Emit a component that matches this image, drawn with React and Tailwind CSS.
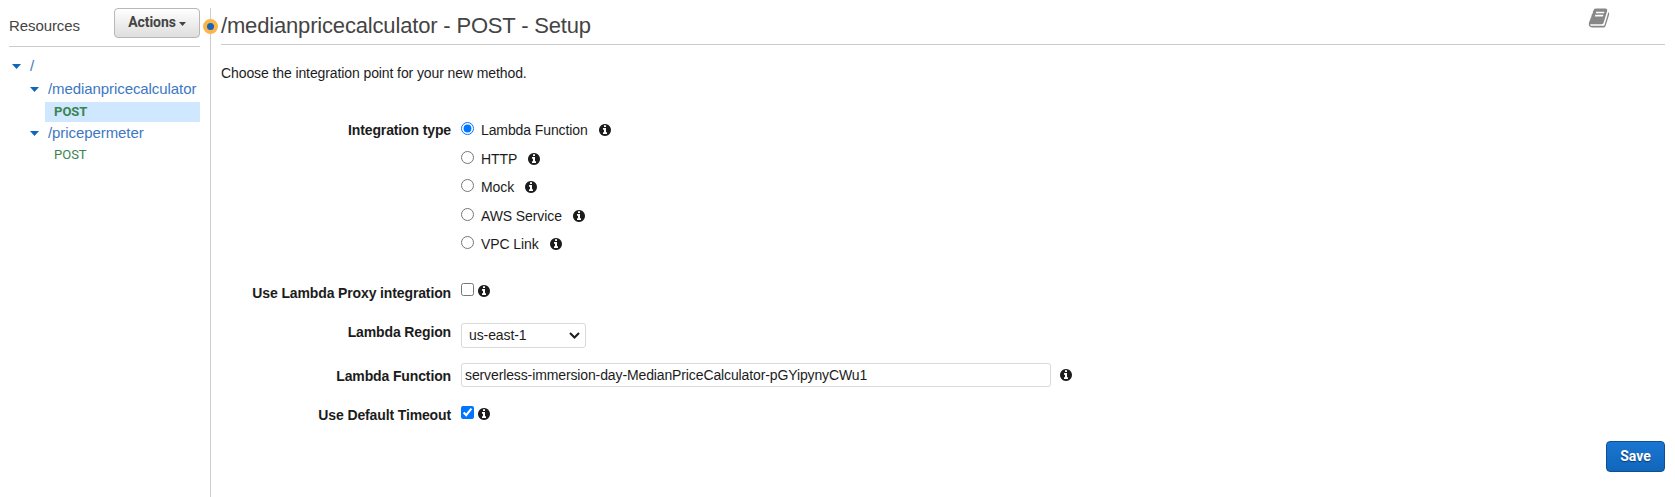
import React from 'react';

function InfoIcon({ className = '' }) {
  return (
    <svg viewBox="128 128 1536 1536" className={`h-3 w-3 shrink-0 fill-[#1c1c1c] ${className}`}>
      <path d="M1152 1376v-160q0-14-9-23t-23-9h-96v-512q0-14-9-23t-23-9h-320q-14 0-23 9t-9 23v160q0 14 9 23t23 9h96v320h-96q-14 0-23 9t-9 23v160q0 14 9 23t23 9h448q14 0 23-9t9-23zm-128-896v-160q0-14-9-23t-23-9h-192q-14 0-23 9t-9 23v160q0 14 9 23t23 9h192q14 0 23-9t9-23zm640 416q0 209-103 385.500t-279.500 279.500-385.500 103-385.500-103-279.500-279.500-103-385.500 103-385.500 279.500-279.500 385.500-103 385.500 103 279.500 279.500 103 385.500z" />
    </svg>
  );
}

function BookIcon() {
  return (
    <svg viewBox="0 0 1792 1792" className="mr-[55px] h-[22px] w-[22px] fill-[#888]">
      <path d="M1703 478q40 57 18 129l-275 906q-19 64-76.500 107.500t-122.500 43.500h-923q-77 0-148.500-53.500t-99.500-131.500q-24-67-2-127 0-4 3-27t4-37q1-8-3-21.500t-3-19.500q2-11 8-21t16.500-23.500 16.500-23.500q23-38 45-91.500t30-91.500q3-10 .5-30t-.5-28q3-11 17-28t17-23q21-36 42-92t25-90q1-9-2.500-32t.5-28q4-13 22-30.500t22-22.500q19-26 42.500-84.500t27.500-96.500q1-8-3-25.500t-2-26.500q2-8 9-18t18-23 17-21q8-12 16.500-30.500t15-35 16-36 19.500-32 26.500-23.500 36-11.500 47.500 5.500l-1 3q38-9 51-9h761q74 0 114 56t18 130l-274 906q-36 119-71.500 153.500t-128.500 34.500h-869q-27 0-38 15-11 16-1 43 24 70 144 70h923q29 0 56-15.500t35-41.500l300-987q7-22 5-57 38 15 59 43zm-1064 2q-4 13 2 22.500t20 9.500h608q13 0 25.500-9.500t16.500-22.500l21-64q4-13-2-22.500t-20-9.500h-608q-13 0-25.500 9.500t-16.500 22.500zm-83 256q-4 13 2 22.500t20 9.500h608q13 0 25.500-9.500t16.500-22.500l21-64q4-13-2-22.500t-20-9.500h-608q-13 0-25.500 9.500t-16.500 22.500z" />
    </svg>
  );
}

function Caret() {
  return (
    <svg viewBox="0 0 9 5" className="h-[5px] w-[9px] shrink-0 fill-[#1166bb]">
      <path d="M0 0h9L4.500 5z" />
    </svg>
  );
}

const types = ['Lambda Function', 'HTTP', 'Mock', 'AWS Service', 'VPC Link'];

function Label({ children, className = '' }) {
  return (
    <div className={`w-[230px] shrink-0 text-right font-bold leading-5 tracking-[-0.13px] ${className}`}>{children}</div>
  );
}

function Sidebar() {
  return (
    <aside className="ml-[9px] mt-2 w-[191px] shrink-0 text-[15px] tracking-[-0.08px]">
      <div className="flex h-[39px] items-start justify-between border-b border-[#ccc] text-[#444]">
        <span className="pt-2 leading-5">Resources</span>
        <button className="flex h-[30px] w-[86px] items-center justify-center gap-[3px] rounded-[4px] border border-[#b8b8b8] bg-linear-to-b from-white to-[#dedede] pb-0.5 font-['Roboto',sans-serif] text-[14px] font-bold text-[#444]">
          Actions
          <svg viewBox="0 0 7 4" className="mt-[3px] h-[4px] w-[7px] fill-[#444]">
            <path d="M0 0h7L3.500 4z" />
          </svg>
        </button>
      </div>
      <div className="flex flex-col pt-[7px] text-[#3c78c3]">
        <div className="flex h-6 items-center gap-[9px] pl-[3px]"><Caret /><span>/</span></div>
        <div className="flex h-6 items-center gap-[9px] pb-0.5 pl-[21px]"><Caret /><span>/medianpricecalculator</span></div>
        <div className="ml-9 flex h-5 items-center bg-[#cfe7ff] pl-[9px] font-['Roboto',sans-serif] text-[13px] font-bold tracking-normal text-[#3a8450]">POST</div>
        <div className="flex h-6 items-center gap-[9px] pb-px pl-[21px]"><Caret /><span>/pricepermeter</span></div>
        <div className="ml-9 flex h-[18px] items-center pl-[9px] font-['Roboto',sans-serif] text-[13px] tracking-normal text-[#3a8450]">POST</div>
      </div>
    </aside>
  );
}

export default function App() {
  return (
    <div className="flex h-[497px] w-[1675px] overflow-hidden bg-white font-['Liberation_Sans',Arial,sans-serif] text-[14px] tracking-[-0.1px] text-[#1c1c1c]">
      <Sidebar />
      <div className="relative ml-[10px] mt-2 w-px shrink-0 bg-[#ccc]">
        <span className="absolute -left-[7px] top-[11px] h-[15px] w-[15px] rounded-full border-4 border-[#fdb44b] bg-[#1166bb]" />
      </div>
      <main className="ml-[10px] mr-[10px] flex min-w-0 flex-1 flex-col">
        <header className="flex h-[45px] shrink-0 items-start justify-between border-b border-[#ccc]">
          <h1 className="pt-3 text-[22px] leading-7 tracking-[-0.17px] text-[#444]">/medianpricecalculator - POST - Setup</h1>
          <div className="pt-[7px]"><BookIcon /></div>
        </header>
        <p className="pt-[18px] leading-5">Choose the integration point for your new method.</p>
        <form className="flex flex-col pt-[37px]">
          <div className="flex h-[163px] items-start gap-[10px]">
            <Label>Integration type</Label>
            <div className="flex flex-col">
              {types.map((t, i) => (
                <label key={t} className="flex h-[28.5px] items-start leading-5">
                  <input type="radio" name="type" defaultChecked={i === 0} className="mr-[7px] mt-0.5 h-[13px] w-[13px]" />
                  <span>{t}</span>
                  <InfoIcon className="ml-[11px] mt-1" />
                </label>
              ))}
            </div>
          </div>
          <div className="flex h-[39px] items-start gap-[10px]">
            <Label>Use Lambda Proxy integration</Label>
            <input type="checkbox" className="h-[13px] w-[13px]" />
            <InfoIcon className="-ml-[6px] mt-0.5" />
          </div>
          <div className="flex h-[41px] items-start gap-[10px]">
            <Label>Lambda Region</Label>
            <div className="mt-[1px] flex h-[25px] w-[125px] items-center justify-between rounded-[3px] border border-[#d9d9d9] pl-[7px] pr-[5px]">
              <span className="pb-px leading-5">us-east-1</span>
              <svg viewBox="0 0 11 7" className="h-[7px] w-[11px] fill-none stroke-[#1c1c1c] stroke-2">
                <path d="M1 1l4.500 4.500L10 1" />
              </svg>
            </div>
          </div>
          <div className="flex h-[43px] items-start gap-[10px]">
            <Label className="pt-[3px]">Lambda Function</Label>
            <input type="text" defaultValue="serverless-immersion-day-MedianPriceCalculator-pGYipynyCWu1" className="h-6 w-[590px] rounded-[3px] border border-[#d9d9d9] px-[3px] pb-px leading-5 tracking-[-0.12px]" />
            <InfoIcon className="-ml-px mt-[6px]" />
          </div>
          <div className="flex h-[35px] items-start gap-[10px]">
            <Label className="-mt-px">Use Default Timeout</Label>
            <input type="checkbox" defaultChecked className="h-[13px] w-[13px]" />
            <InfoIcon className="-ml-[6px] mt-0.5" />
          </div>
          <button type="button" className="h-[31px] w-[59px] self-end rounded-[4px] border border-[#0e4f94] bg-linear-to-b from-[#1a76d2] to-[#1166bb] pb-px font-['Roboto',sans-serif] text-[14px] font-bold tracking-normal text-white [text-shadow:0_1px_1px_#0a3a6e]">Save</button>
        </form>
      </main>
    </div>
  );
}
